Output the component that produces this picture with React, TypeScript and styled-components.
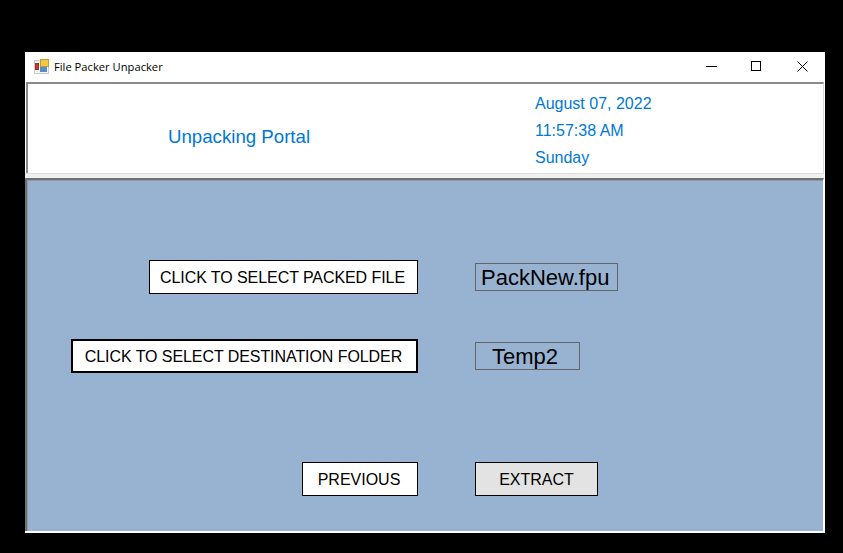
import React from 'react'
import styled, { createGlobalStyle } from 'styled-components';

const GlobalStyle = createGlobalStyle`
  html, body {
    margin: 0;
    padding: 0;
    background: #000;
  }
  body {
    width: 843px;
    height: 553px;
    overflow: hidden;
    font-family: "Liberation Sans", Arial, sans-serif;
  }
`

function AppIcon() {
  return (
    <svg width="16" height="16" viewBox="0 0 16 16">
      <rect x="0.5" y="1.5" width="14" height="13" fill="#f6f6f6" stroke="#c9c9c9" />
      <rect x="6.5" y="0.5" width="8" height="7" fill="#f4c83f" stroke="#c09a35" />
      <rect x="1.5" y="4.5" width="3" height="6" fill="#d2322a" stroke="#8a3a33" />
      <rect x="6.5" y="8.5" width="6" height="4" fill="#4f8fd8" stroke="#5f8cc0" />
    </svg>
  )
}

function App() {
  return (
    <>
      <GlobalStyle />
      <Window>
        <TitleBar>
          <AppIcon />
          <TitleText>File Packer Unpacker</TitleText>
          <Controls>
            <Control>
              <svg width="11" height="11" viewBox="0 0 11 11"><path d="M0 5.5h11" stroke="#000" fill="none" /></svg>
            </Control>
            <Control>
              <svg width="11" height="11" viewBox="0 0 11 11"><rect x="0.5" y="0.5" width="9" height="9" stroke="#000" fill="none" /></svg>
            </Control>
            <Control>
              <svg width="11" height="11" viewBox="0 0 11 11"><path d="M0.5 0.5l10 10M10.5 0.5l-10 10" stroke="#000" fill="none" /></svg>
            </Control>
          </Controls>
        </TitleBar>
        <Header>
          <Portal>Unpacking Portal</Portal>
          <Clock>
            <span>August 07, 2022</span>
            <span>11:57:38 AM</span>
            <span>Sunday</span>
          </Clock>
        </Header>
        <Divider />
        <Body>
          <Row>
            <ActionButton>CLICK TO SELECT PACKED FILE</ActionButton>
            <Value>PackNew.fpu</Value>
          </Row>
          <Row $top={45}>
            <ActionButton $wide $focused>CLICK TO SELECT DESTINATION FOLDER</ActionButton>
            <Value $short>Temp2</Value>
          </Row>
          <Row $top={89}>
            <NavButton>PREVIOUS</NavButton>
            <NavButton $active>EXTRACT</NavButton>
          </Row>
        </Body>
      </Window>
    </>
  )
}

export default App;

const Window = styled.div`
  width: 800px;
  height: 481px;
  margin: 52px 0 0 25px;
  background: #fff;
  display: flex;
  flex-direction: column;
`

const TitleBar = styled.div`
  height: 30px;
  display: flex;
  align-items: center;
  padding-left: 9px;
  flex-shrink: 0;
`

const TitleText = styled.span`
  margin-left: 4px;
  margin-bottom: 2px;
  font-family: "Open Sans", "Noto Sans", sans-serif;
  font-size: 11.2px;
  color: #000;
`

const Controls = styled.div`
  margin-left: auto;
  padding-bottom: 2px;
  display: flex;
`

const Control = styled.div`
  width: 45px;
  height: 28px;
  display: flex;
  align-items: center;
  justify-content: center;

  &:last-child {
    margin-left: 1px;
  }
`

const Header = styled.div`
  height: 89px;
  margin: 0 1px;
  border-top: 2px solid #8a8a8a;
  border-left: 2px solid #8a8a8a;
  border-right: 1px solid #d8d8d8;
  display: flex;
  color: #0078d7;
  flex-shrink: 0;
`

const Portal = styled.div`
  margin: 42px 0 0 140px;
  width: 367px;
  font-size: 18.67px;
  line-height: 21px;
`

const Clock = styled.div`
  display: flex;
  flex-direction: column;
  gap: 9px;
  padding-top: 11px;
  font-size: 16px;
  line-height: 18px;
`

const Divider = styled.div`
  height: 4px;
  background: #f0f0f0;
  border-top: 1px solid #dcdcdc;
  margin-right: 1px;
  flex-shrink: 0;
`

const Body = styled.div`
  flex: 1;
  margin-right: 1px;
  margin-bottom: 2px;
  background: #98b3d1;
  border-top: 2px solid #6f6f6f;
  border-left: 2px solid #6f6f6f;
  box-shadow: inset 1px 1px 0 #8e9aa8;
  padding-top: 80px;
  box-sizing: border-box;
  border-right: 1px solid #fff;
`

const Row = styled.div<{ $top?: number }>`
  display: grid;
  grid-template-columns: 391px auto;
  column-gap: 57px;
  justify-content: start;
  align-items: center;
  margin-top: ${(p) => p.$top ?? 0}px;
`

const ActionButton = styled.button<{ $wide?: boolean; $focused?: boolean }>`
  justify-self: end;
  box-sizing: border-box;
  height: 34px;
  width: ${(p) => (p.$wide ? 347 : 269)}px;
  padding: 2px 2px 0 0;
  background: #fff;
  border: ${(p) => (p.$focused ? 2 : 1)}px solid #000;
  font: 16px "Liberation Sans", Arial, sans-serif;
  letter-spacing: -0.07px;
  color: #000;
`

const NavButton = styled.button<{ $active?: boolean }>`
  justify-self: ${(p) => (p.$active ? 'start' : 'end')};
  box-sizing: border-box;
  height: 34px;
  width: ${(p) => (p.$active ? 123 : 116)}px;
  padding: 2px ${(p) => (p.$active ? 0 : 2)}px 0 0;
  background: ${(p) => (p.$active ? '#e3e3e3' : '#fff')};
  border: 1px solid #000;
  font: 16px "Liberation Sans", Arial, sans-serif;
  color: #000;
`

const Value = styled.div<{ $short?: boolean }>`
  box-sizing: border-box;
  height: 28px;
  width: ${(p) => (p.$short ? 105 : 143)}px;
  padding-left: ${(p) => (p.$short ? 16 : 5)}px;
  border: 1px solid #666;
  font-size: 22px;
  line-height: 27px;
  color: #000;
`
